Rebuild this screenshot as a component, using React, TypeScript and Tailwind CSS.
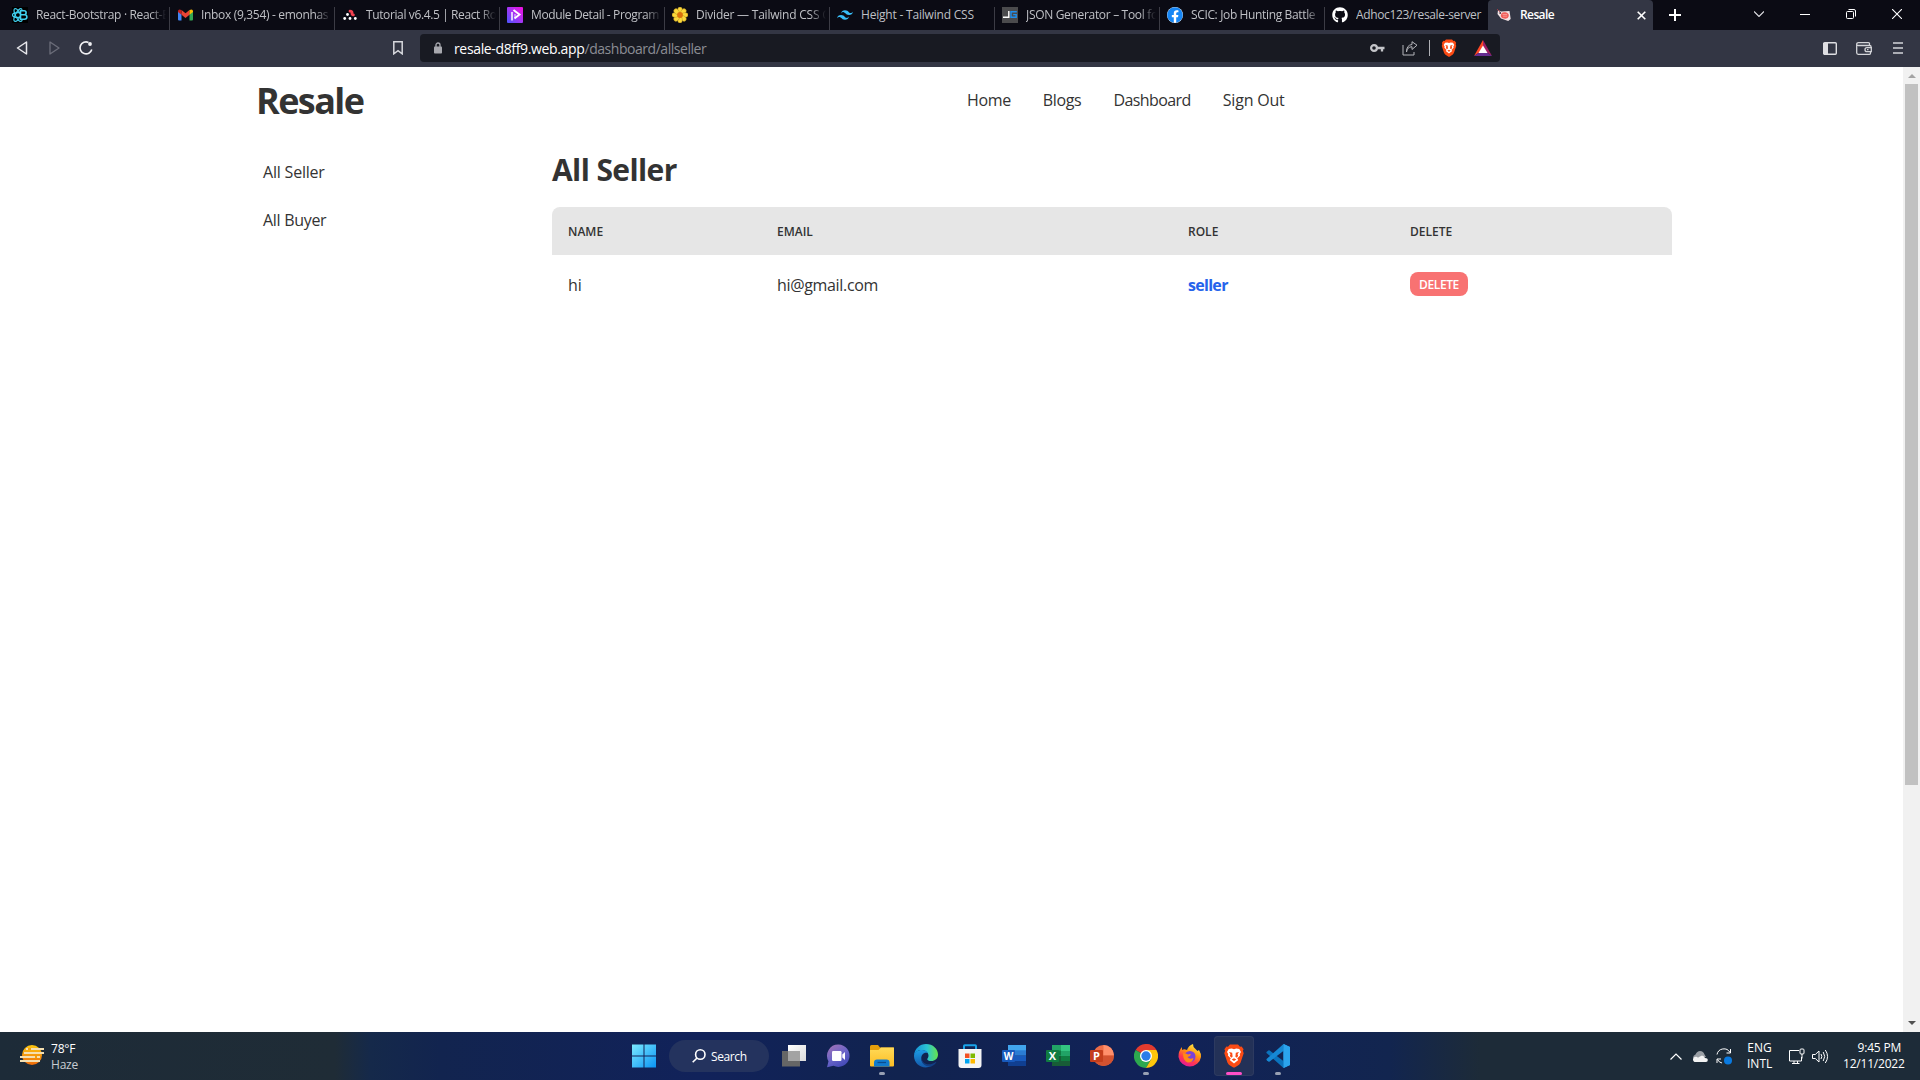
import React from "react";
import { SiTailwindcss } from "react-icons/si";
import { FaGithub, FaFacebook } from "react-icons/fa";

const Brave = ({ s }: { s: number }) => (
  <svg width={s} height={s} viewBox="0 0 24 24">
    <path fill="#fb4b14" d="M8 .5h8l2 2.2 1.6-.3 2 2.8-.7 1.600.8 2.400-3.200 9.500-1.400 2-4.400 2.800h-1.400l-4.400-2.800-1.400-2L2.300 9.200l.8-2.400-.7-1.600 2-2.800 1.600.3z" />
    <path fill="#fff" d="M12 5.300l2.300-.8 3 .6 1.700 2.900-1.200 1.900.3 1.700-2.900 2.900 1.100 1.500-4.300 3.400-4.300-3.400 1.100-1.500-2.900-2.900.3-1.700L5 8l1.700-2.900 3-.6z" />
    <path fill="#fb4b14" d="M7 8l3.200.8.4 4-1.500 1-1.300-2 .7-1.500zM17 8l-3.200.8-.4 4 1.500 1 1.300-2-.7-1.500zM9.700 15.500l2.300-1.200 2.300 1.200-2.300 1.400z" />
  </svg>
);

const ReactBootstrap = () => (
  <svg width="16" height="16" viewBox="0 0 16 16" fill="none" stroke="#41d1f0">
    <rect width="16" height="16" fill="#000" stroke="none" />
    <ellipse cx="6" cy="8" rx="5.500" ry="2.400" strokeWidth="1.200" />
    <ellipse cx="6" cy="8" rx="7" ry="2.500" strokeWidth="1.200" transform="rotate(62 6 8)" />
    <ellipse cx="6" cy="8" rx="7" ry="2.500" strokeWidth="1.200" transform="rotate(118 6 8)" />
    <path d="M8.500 3.700h3.600q2 0 2 2t-2 2.100h-3.600zM8.500 7.800h4q2.400 0 2.400 2.200t-2.400 2.300h-4z" strokeWidth="1.600" fill="#000" />
  </svg>
);

const Gmail = () => (
  <svg width="15" height="12" viewBox="0 0 15 12">
    <path fill="#4285f4" d="M0 2v8.500Q0 11.500 1 11.500h2.500V4z" />
    <path fill="#34a853" d="M15 2v8.500q0 1-1 1h-2.500V4z" />
    <path fill="#ea4335" d="M3.500 1l4 3.200 4-3.200v4.700l-4 3.200-4-3.200z" />
    <path fill="#c5221f" d="M0 2Q.3-.5 3.500 1v4.700L0 3z" />
    <path fill="#fbbc04" d="M15 2q-.3-2.500-3.500-1v4.700L15 3z" />
  </svg>
);

const RouterIcon = () => (
  <svg width="14" height="12" viewBox="0 0 14 12">
    <g fill="#fff"><circle cx="4.500" cy="5.500" r="1.400" /><circle cx="1.700" cy="9.500" r="1.400" /><circle cx="7" cy="9.500" r="1.400" /><circle cx="12.300" cy="9.500" r="1.400" /></g>
    <path d="M7 2.200q2.500 0 2 2-.2 1.500 1.400 1.700" stroke="#f44250" strokeWidth="2.800" strokeLinecap="round" fill="none" />
  </svg>
);

const ModuleIcon = () => (
  <svg width="16" height="16" viewBox="0 0 16 16">
    <defs><linearGradient id="mod" x1="0" y1="1" x2="1" y2="0"><stop stopColor="#4a55ff" /><stop offset=".5" stopColor="#a436f5" /><stop offset="1" stopColor="#f80ce0" /></linearGradient></defs>
    <rect width="16" height="16" rx="1" fill="url(#mod)" />
    <path d="M5 5v8.500" stroke="#fff" strokeWidth="1.500" /><path d="M6.500 3l6 4.500-5 4" stroke="#fff" strokeWidth="1.900" fill="none" /><path d="M8 7v4" stroke="#fff" strokeOpacity=".6" strokeWidth="1.400" />
  </svg>
);

const petals = [0, 45, 90, 135, 180, 225, 270, 315];
const Daisy = () => (
  <svg width="16" height="16" viewBox="0 0 16 16">
    {petals.map((a) => <ellipse key={a} cx="8" cy="3.200" rx="2.400" ry="3.200" fill="#fbd83a" stroke="#a8831b" strokeWidth=".4" transform={`rotate(${a} 8 8)`} />)}
    <circle cx="8" cy="8" r="2.900" fill="#d9710c" />
  </svg>
);

const JsonIcon = () => (
  <svg width="16" height="16" viewBox="0 0 16 16" fill="none" strokeWidth="1.400">
    <rect width="16" height="16" fill="#4b4b4d" />
    <path d="M1 10.300h5.800V4" stroke="#fff" />
    <path d="M14.800 4.700H9v5.600h5.200V7.600h-3" stroke="#1f8ff0" />
  </svg>
);

const ResaleIcon = () => (
  <svg width="14" height="13" viewBox="0 0 14 13">
    <path d="M1 1l3 1.500L12.500 2l1.200 8-2.500 2L4 9.500.5 5z" fill="#f2e4e6" />
    <path d="M0 0l3 3" stroke="#b33a45" strokeWidth=".8" />
    <ellipse cx="7.800" cy="6.500" rx="4" ry="3.200" fill="#f0605c" transform="rotate(12 8 6.500)" />
    <circle cx="3.200" cy="4" r=".9" fill="#47323d" />
    <path d="M5.500 5.500h4.500M6 7.200h4" stroke="#f9a9a4" strokeWidth=".7" />
  </svg>
);

const fade = "[mask-image:linear-gradient(to_right,black_88%,transparent_100%)]";
const tabs = [
  { icon: <ReactBootstrap />, title: "React-Bootstrap · React-B", style: `${fade} tracking-[-0.33px]` },
  { icon: <Gmail />, title: "Inbox (9,354) - emonhas", style: `${fade} tracking-[-0.32px]` },
  { icon: <RouterIcon />, title: "Tutorial v6.4.5 | React Ro", style: `${fade} tracking-[-0.38px]` },
  { icon: <ModuleIcon />, title: "Module Detail - Program", style: `${fade} tracking-[-0.38px]` },
  { icon: <Daisy />, title: "Divider — Tailwind CSS C", style: `${fade} tracking-[-0.22px]` },
  { icon: <SiTailwindcss size={16} color="#38bdf8" />, title: "Height - Tailwind CSS", style: "tracking-[-0.2px]" },
  { icon: <JsonIcon />, title: "JSON Generator – Tool fo", style: `${fade} tracking-[-0.32px]` },
  { icon: <span className="flex rounded-full bg-white"><FaFacebook size={16} color="#1686f5" /></span>, title: "SCIC: Job Hunting Battle", style: `${fade} tracking-[-0.36px]` },
  { icon: <FaGithub size={16} color="#fff" />, title: "Adhoc123/resale-server", style: "tracking-[-0.36px]" },
];

function TabStrip() {
  return (
    <div className="flex h-[30px] bg-[#0b0b14] text-[12px] text-[#bfc0c5]">
      <div className="flex w-[1488px] pl-[5px]">
        {tabs.map((t, i) => (
          <div key={t.title} className="flex h-[30px] w-[165px] shrink-0 items-center">
            <div className="flex h-full w-[164px] items-center pl-[7px]">
              <span className="flex w-4 shrink-0 justify-center">{t.icon}</span>
              <span className={`ml-2 w-[130px] overflow-hidden whitespace-nowrap leading-[18px] ${t.style}`}>{t.title}</span>
            </div>
            {i < 8 && <div className="mt-[7px] h-[23px] w-px bg-[#3c3c45]" />}
          </div>
        ))}
      </div>
      <div className="flex w-[165px] items-center rounded-t bg-[#333644] pl-[9px] text-white">
        <ResaleIcon />
        <span className="ml-[9px] w-[117px] font-semibold tracking-[-0.6px]">Resale</span>
        <svg width="9" height="9" viewBox="0 0 9 9" stroke="#fff" strokeWidth="1.600"><path d="M.7.700l7.600 7.600M8.300.700L.7 8.300" /></svg>
      </div>
      <svg className="ml-4 mt-[9px]" width="12" height="12" stroke="#fff" strokeWidth="2"><path d="M6 0v12M0 6h12" /></svg>
      <div className="ml-[73px] flex items-center gap-9 pb-[2px]">
        <svg width="10" height="6" viewBox="0 0 10 6" fill="none" stroke="#e4e4e8" strokeWidth="1.100"><path d="M0 .5l5 5 5-5" /></svg>
        <svg width="10" height="10" stroke="#fff"><path d="M0 5.500h10" /></svg>
        <svg width="10" height="10" viewBox="0 0 10 10" fill="none" stroke="#fff"><rect x=".5" y="2.500" width="7" height="7" rx="1" /><path d="M2.500.5H8Q9.500.5 9.500 2v5.500" /></svg>
        <svg width="10" height="10" viewBox="0 0 10 10" stroke="#fff" strokeWidth="1.100"><path d="M0 0l10 10M10 0L0 10" /></svg>
      </div>
    </div>
  );
}

function Toolbar() {
  return (
    <div className="flex h-[37px] items-center bg-[#333644] pb-px">
      <svg className="ml-4" width="12" height="14" viewBox="0 0 12 14" fill="none" stroke="#e8e8ec" strokeWidth="1.500" strokeLinejoin="round"><path d="M10.500 1v12L1.500 7z" /></svg>
      <svg className="ml-[21px]" width="12" height="14" viewBox="0 0 12 14" fill="none" stroke="#6c6e7a" strokeWidth="1.300" strokeLinejoin="round"><path d="M1 1v12L10 7z" /></svg>
      <svg className="ml-[17px]" width="16" height="16" viewBox="0 0 16 16" fill="none" stroke="#f0f0f3" strokeWidth="1.600"><path d="M10.500 2.400A6 6 0 1 0 13.800 9.500" /><circle cx="12" cy="4" r="1.900" fill="#f0f0f3" stroke="none" /></svg>
      <svg className="ml-[299px]" width="10" height="14" viewBox="0 0 10 14" fill="none" stroke="#d7d8dd" strokeWidth="1.500"><path d="M.8.800h8.400v12L5 9.700.8 12.800z" /></svg>
      <div className="ml-[17px] flex h-7 w-[1080px] items-center rounded bg-[#181a22] pl-[14px]">
        <svg width="8" height="12" viewBox="0 0 8 12"><rect y="4.500" width="8" height="7" rx=".8" fill="#a7a8ae" /><path d="M2 5V3a2 2 0 0 1 4 0v2" fill="none" stroke="#a7a8ae" strokeWidth="1.300" /></svg>
        <span className="ml-[12px] w-[916px] whitespace-nowrap text-[14px] tracking-[-0.46px] text-[#8b8d94]"><span className="tracking-[-0.35px] text-white">resale-d8ff9.web.app</span>/dashboard/allseller</span>
        <svg width="15" height="10" viewBox="0 0 15 10"><circle cx="4" cy="5" r="2.900" fill="none" stroke="#c4c5c9" strokeWidth="2.200" /><path d="M7 5h7.500M12 5v3.500" stroke="#c4c5c9" strokeWidth="2.300" /></svg>
        <svg className="ml-[17px]" width="16" height="15" viewBox="0 0 16 15" fill="none" stroke="#b4b5ba"><path d="M1 4v10h11v-3M4.500 11q.5-5 5.500-5.300V8.500l5-4.300-5-3.500v2.800Q4.500 4 4.500 11z" /></svg>
        <div className="ml-[11px] h-4 w-px bg-[#b0b1b6]" />
        <span className="ml-[10px]"><Brave s={18} /></span>
        <svg className="ml-[16px]" width="18" height="16" viewBox="0 0 18 16"><path d="M9 0L0 16l9-6z" fill="#ff4724" /><path d="M9 0l9 16-9-6z" fill="#9e1f63" /><path d="M0 16l9-6 9 6z" fill="#662d91" /><path d="M9 5.500L4.500 13h9z" fill="#fff" /></svg>
      </div>
      <svg className="ml-[323px]" width="14" height="13" viewBox="0 0 14 13"><rect x=".7" y=".7" width="12.600" height="11.600" rx="1" fill="none" stroke="#dedee2" strokeWidth="1.400" /><path d="M0 1h5v11H0z" fill="#dedee2" /></svg>
      <svg className="ml-[19px]" width="16" height="13" viewBox="0 0 16 13" fill="none" stroke="#d4d5d9" strokeWidth="1.300"><path d="M13.500 3.500v-2Q13.500.7 12.500.7h-10Q.7.700.7 2.200v8.600q0 1.500 1.500 1.500h11.300q1 0 1-1V9M.7 2.500q.3 1 1.500 1H14q1 0 1 1V6" /><path d="M15.300 5.700H11q-2 0-2 2t2 2h4.300z" /><path d="M11 7.700h1.500" /></svg>
      <svg className="ml-[21px]" width="10" height="12" stroke="#d4d5d9" strokeWidth="1.600"><path d="M0 1h10M0 6h10M0 11h10" /></svg>
    </div>
  );
}

function Page() {
  return (
    <div className="flex h-[965px] bg-white text-[#333333]">
      <main className="w-[1903px]">
        <header className="flex h-[66px] items-center pl-[256px]">
          <h1 className="w-[711px] pt-[2px] text-[36px] font-bold leading-10 tracking-[-1.6px]">Resale</h1>
          <nav className="flex gap-8 whitespace-nowrap pb-px text-[16px] tracking-[-0.35px]">
            <a>Home</a><a>Blogs</a><a className="tracking-[-0.58px]">Dashboard</a><a className="tracking-[-0.2px]">Sign Out</a>
          </nav>
        </header>
        <div className="flex">
          <aside className="flex w-[552px] flex-col pl-[263px] pt-[15px] text-[16px] tracking-[-0.2px]">
            <a className="flex h-12 items-center">All Seller</a>
            <a className="flex h-12 items-center tracking-[-0.3px]">All Buyer</a>
          </aside>
          <section className="w-[1120px] pt-[19px]">
            <h2 className="text-[30px] font-bold leading-9 tracking-[-0.6px]">All Seller</h2>
            <div className="mt-[19px] grid h-12 grid-cols-[209px_411px_222px_1fr] items-center rounded-t-lg bg-[#e6e6e6] pl-4 pt-px text-[12px] font-semibold uppercase">
              <span>Name</span><span>Email</span><span>Role</span><span>Delete</span>
            </div>
            <div className="grid h-[58px] grid-cols-[209px_411px_222px_1fr] items-center pl-4 text-[16px]">
              <span className="pt-px">hi</span><span className="pt-px tracking-[-0.33px]">hi@gmail.com</span><span className="pt-px font-bold tracking-[-0.7px] text-[#2563eb]">seller</span>
              <button className="flex h-6 w-[58px] items-center justify-center rounded-lg bg-[#f87272] pt-px text-[12px] font-semibold uppercase tracking-[-0.4px] text-white">Delete</button>
            </div>
          </section>
        </div>
      </main>
      <div className="flex w-[17px] flex-col items-center bg-[#f1f1f1]">
        <svg className="mt-[7px]" width="8" height="4"><path d="M0 4l4-4 4 4z" fill="#a3a3a3" /></svg>
        <div className="mt-[6px] h-[701px] w-[13px] bg-[#c1c1c1]" />
        <svg className="mb-[7px] mt-auto" width="8" height="4"><path d="M0 0l4 4 4-4z" fill="#505050" /></svg>
      </div>
    </div>
  );
}

const Windows = () => (
  <svg width="24" height="24" viewBox="0 0 24 24"><defs><linearGradient id="win" x2="1" y2="1"><stop stopColor="#7be9ff" /><stop offset="1" stopColor="#0a94f4" /></linearGradient></defs><path fill="url(#win)" d="M0 .5h11.500V11.500H0zM12.500.5H24v11H12.500zM0 12.500h11.500v11H0zM12.500 12.500H24v11H12.500z" /></svg>
);
const TaskView = () => (
  <svg width="24" height="24" viewBox="0 0 24 24"><defs><linearGradient id="tv" x2="1" y2="1"><stop stopColor="#fff" /><stop offset="1" stopColor="#dadada" /></linearGradient></defs><path d="M6 1h18v16H6z" fill="url(#tv)" /><path d="M0 7h18v15.500H0z" fill="#666" /><path d="M6 7h12v10H6z" fill="#a3a3a3" /></svg>
);
const Chat = () => (
  <svg width="24" height="24" viewBox="0 0 24 24"><defs><linearGradient id="chat" x2=".6" y2="1"><stop stopColor="#a774b4" /><stop offset=".6" stopColor="#6864c8" /><stop offset="1" stopColor="#454bb8" /></linearGradient></defs><path d="M12.500 0.500a11.200 11.200 0 1 1-5 21.300L1 23.200l1.500-6A11.200 11.200 0 0 1 12.500.5z" fill="url(#chat)" /><rect x="6" y="7" width="9.500" height="10" rx="1.200" fill="#fff" /><path d="M16.300 10.500L19 8v8l-2.700-2.500z" fill="#fff" /></svg>
);
const Folder = () => (
  <svg width="24" height="24" viewBox="0 0 24 24"><defs><linearGradient id="fold" x2="0" y2="1"><stop stopColor="#ffda58" /><stop offset="1" stopColor="#fdbd24" /></linearGradient></defs><path d="M0 2.500Q0 1 1.500 1H8l2 2.500h13q1 0 1 1V8H0z" fill="#e59e0b" /><path d="M0 6h8.500L11 3.500h13v18q0 1-1 1H1q-1 0-1-1z" fill="url(#fold)" /><path d="M4 22.500v-4q0-3 3-3h9.500q3 0 3 3v4z" fill="#117bcd" /><path d="M7.500 18.500h8.500" stroke="#0b4c8d" strokeWidth="1.200" /></svg>
);
const Edge = () => (
  <svg width="24" height="24" viewBox="0 0 24 24"><defs><linearGradient id="ea" y1=".4" x2="1" y2=".4"><stop stopColor="#1590db" /><stop offset=".55" stopColor="#2bc4d2" /><stop offset="1" stopColor="#66e44a" /></linearGradient><linearGradient id="eb" x2="0" y2="1"><stop stopColor="#1c9ce6" /><stop offset="1" stopColor="#1357a8" /></linearGradient></defs>
    <path d="M0 11.500C.5 4.500 5.800 0 12 0c7 0 12 5 12 10.500 0 4.200-3.200 6.500-6.500 6.500-2.800 0-4.300-1-4.300-1.800 0-.7 1.300-1.200 1.300-3.400C14.500 8.500 11.500 6 8 6 4.200 6 1 8 0 11.500z" fill="url(#ea)" />
    <path d="M0 12c0-3.500 3.500-6 8-6 3 0 5 1.300 6 3-5-1.500-7.500 3-6.500 7 1 4 5.500 6.300 10 5.800C9.500 26.500 0 20.500 0 12z" fill="url(#eb)" /><path d="M8 13c-1.500 6.500 7 10 13.800 5 .5-.2.700.2.400.6-1.800 2.600-4 3.600-5 3.800C10.500 23 5.500 18 8 13z" fill="#123f84" /></svg>
);
const Store = () => (
  <svg width="24" height="24" viewBox="0 0 24 24"><path d="M6 6V2q0-.8.800-.8h10.400q.8 0 .8.800v4" fill="none" stroke="#1aa3e8" strokeWidth="2" /><path d="M.5 5h23v16q0 3-3 3h-17q-3 0-3-3z" fill="#f4f4f5" /><path fill="#f25022" d="M7 9.500h4.500V14H7z" /><path fill="#7fba00" d="M12.500 9.500H17V14h-4.500z" /><path fill="#00a4ef" d="M7 15h4.500v4.500H7z" /><path fill="#ffb900" d="M12.500 15H17v4.500h-4.500z" /></svg>
);
const WordIcon = () => (
  <div className="relative h-6 w-6">
    <svg width="24" height="24" viewBox="0 0 24 24"><path d="M6 1h18v6H6z" fill="#41a5ee" /><path d="M6 6.300h18v5.400H6z" fill="#2b7cd3" /><path d="M6 11.700h18V17H6z" fill="#185abd" /><path d="M6 17h18v5H6z" fill="#103f91" /><rect y="6" width="13" height="12" rx="1" fill="#185abd" /></svg>
    <span className="absolute left-0 top-[6px] w-[13px] text-center text-[10px] font-bold leading-3 text-white">W</span>
  </div>
);
const ExcelIcon = () => (
  <div className="relative h-6 w-6">
    <svg width="24" height="24" viewBox="0 0 24 24"><path d="M6 1h18v21H6z" fill="#21a366" /><path d="M15 1h9v6h-9z" fill="#33c481" /><path d="M6 6.500h9v5H6z" fill="#107c41" /><path d="M6 12h18v10H6z" fill="#185c37" /><path d="M15 12h9v5h-9z" fill="#107c41" /><rect y="6" width="13" height="12" rx="1" fill="#107c41" /></svg>
    <span className="absolute left-0 top-[6px] w-[13px] text-center text-[11px] font-bold leading-3 text-white">X</span>
  </div>
);
const PowerIcon = () => (
  <div className="relative h-6 w-6">
    <svg width="24" height="24" viewBox="0 0 24 24"><circle cx="13.500" cy="11.500" r="10.500" fill="#ed6c47" /><path d="M13.500 1A10.500 10.500 0 0 1 24 11.500H13.500z" fill="#ff8f6b" /><path d="M3 11.500h21a10.500 10.500 0 0 1-21 0z" fill="#d35230" /><rect y="6" width="13" height="12" rx="1" fill="#c43e1c" /></svg>
    <span className="absolute left-0 top-[6px] w-[13px] text-center text-[11px] font-bold leading-3 text-white">P</span>
  </div>
);
const Chrome = () => (
  <svg width="24" height="24" viewBox="0 0 24 24"><path d="M12 12L1.600 6A12 12 0 0 1 22.400 6z" fill="#e33b2e" /><path d="M12 12L1.600 6A12 12 0 0 0 12 24l5.200-9z" fill="#2da94f" /><path d="M12 6h10.400A12 12 0 0 1 12 24l5.200-9z" fill="#fdc60b" /><path d="M12 0a12 12 0 0 1 10.400 6H12z" fill="#e33b2e" /><circle cx="12" cy="12" r="6" fill="#fff" /><circle cx="12" cy="12" r="4.700" fill="#2b7de9" /></svg>
);
const Firefox = () => (
  <svg width="24" height="24" viewBox="0 0 24 24"><defs><linearGradient id="ff" x1=".8" x2=".3" y2="1"><stop stopColor="#fff44f" /><stop offset=".4" stopColor="#ff980e" /><stop offset=".7" stopColor="#ff3750" /><stop offset="1" stopColor="#e3189b" /></linearGradient></defs><path d="M15 0q0 3 2 4.500L19.500 7 21 6q2.300 3.500 2 7A11.400 11.400 0 0 1 .5 13Q.3 7 4 3v3q1-.7 2.500-.8L9 6q1.500-4.500 6-6z" fill="url(#ff)" /><circle cx="12" cy="12.500" r="5.500" fill="#7a41d9" /><path d="M5 9q3 0 5 1.500 2-1 3 0-1 2-3.500 2.500 2 3 6 1-1 5-6 4.500Q5 17 5 9z" fill="#ff8a16" /></svg>
);
const Code = () => (
  <svg width="24" height="24" viewBox="0 0 24 24"><path d="M17.500 0L24 3v18l-6.500 3z" fill="#2ba4ee" /><path d="M17.500 24L.8 9.200q-.8-.8 0-1.500L2.300 6.400q.7-.5 1.400 0L18 17.500z" fill="#0b73bd" /><path d="M17.500 0L.8 14.800q-.8.8 0 1.500l1.500 1.300q.7.500 1.400 0L18 6.500z" fill="#1688d4" /><path d="M17.500 0L24 3v18l-6.500 3.000z" fill="#2ba4ee" /></svg>
);

const apps: { el: React.ReactNode; mark?: string }[] = [
  { el: <TaskView /> }, { el: <Chat /> }, { el: <Folder />, mark: "w-[6px] bg-[#98a0b3]" }, { el: <Edge /> }, { el: <Store /> },
  { el: <WordIcon /> }, { el: <ExcelIcon /> }, { el: <PowerIcon /> }, { el: <Chrome />, mark: "w-[6px] bg-[#98a0b3]" }, { el: <Firefox /> },
  { el: <Brave s={24} />, mark: "w-4 bg-[#ff4fc8]" }, { el: <Code />, mark: "w-[6px] bg-[#98a0b3]" },
];

function Taskbar() {
  return (
    <footer className="flex h-12 bg-[linear-gradient(90deg,#1d2b38_0px,#1f2c36_335px,#15294a_370px,#12244f_440px,#11225a_700px,#11234f_900px,#112258_1150px,#12254f_1390px,#1d2b38_1480px,#1d2b38_1920px)] text-[12px] text-white">
      <div className="flex w-[632px] items-start pl-5 pt-[12px]">
        <svg width="24" height="22" viewBox="0 0 24 22"><defs><linearGradient id="sun" x2="0" y2="1"><stop stopColor="#fdc810" /><stop offset="1" stopColor="#ef6b0a" /></linearGradient></defs><circle cx="12" cy="11" r="10" fill="url(#sun)" /><path d="M6 5h18M4 9h20M0 13h20M0 17h20" stroke="#f5dfb0" strokeWidth="1.900" /><path d="M8 5h3M15 13h2" stroke="#f4a10c" strokeWidth="1.900" /></svg>
        <div className="-mt-[3px] ml-[7px] leading-4 tracking-[-0.2px]"><div>78°F</div><div className="text-[#c7ccd1]">Haze</div></div>
      </div>
      <div className="flex items-center"><Windows /></div>
      <div className="ml-[13px] mt-2 flex h-8 w-[100px] items-center rounded-full bg-[#24335e] pl-[23px]">
        <svg width="14" height="14" viewBox="0 0 14 14" fill="none" stroke="#fff" strokeWidth="1.600"><circle cx="8.300" cy="5.500" r="4.700" /><path d="M5 9L.7 13.300" /></svg>
        <span className="ml-[5px] pt-px tracking-[-0.4px]">Search</span>
      </div>
      <div className="ml-[3px] flex">
        {apps.map((a, i) => (
          <div key={i} className={`mx-[2px] mt-1 flex h-10 w-10 flex-col items-center rounded pt-2 ${i === 10 ? "bg-[#233157] ring-1 ring-inset ring-[#2d3a60]" : ""}`}>
            {a.el}
            {a.mark && <div className={`mt-[4px] h-[3px] shrink-0 rounded-full ${a.mark}`} />}
          </div>
        ))}
      </div>
      <div className="ml-auto flex items-center pr-[19px]">
        <svg width="12" height="7" viewBox="0 0 12 7" fill="none" stroke="#fff" strokeWidth="1.200"><path d="M.5 6.500L6 1l5.500 5.500" /></svg>
        <svg className="ml-[10px]" width="16" height="11" viewBox="0 0 16 11"><path d="M1 7a4 4 0 0 1 2.500-3.500Q5 0 8 0q3.500.3 4.500 3.500L14 6z" fill="#9a9fa5" /><path d="M2.500 11a2.800 2.800 0 0 1 0-5q2-.8 3.500.4l4-2q2.500.5 3 2.600 2.800 0 2.800 2T14 11z" fill="#f3f3f3" /></svg>
        <svg className="ml-[8px]" width="17" height="17" viewBox="0 0 17 17" fill="none" stroke="#fff"><path d="M1 6.500A7 7 0 0 1 14 4.500M14.500 1v4h-4M1 15v-4h4M1.500 11.500Q3 14.500 6 15" /><circle cx="12" cy="12.500" r="4" fill="#0a7ae0" stroke="none" /></svg>
        <div className="ml-[14px] w-[25px] text-center leading-4">ENG<br />INTL</div>
        <svg className="ml-[16px]" width="17" height="17" viewBox="0 0 17 17" fill="none" stroke="#fff"><path d="M11 2.500H1.500v10.500h12V9M4 15.500h7.500M6 13v2.500M9.500 13v2.500" /><rect x="12" y="1" width="4" height="5" rx="1" /><path d="M14 6v4.500" /></svg>
        <svg className="ml-[7px]" width="17" height="15" viewBox="0 0 17 15" fill="none" stroke="#fff"><path d="M.5 5.500v4h2.800L7 13V2L3.300 5.500zM9 5q1.700 2.500 0 5M11.200 3q3 4.500 0 9M13.300 1q4.500 6.500 0 13" /></svg>
        <div className="ml-[14px] w-[58px] whitespace-nowrap text-right leading-4 tracking-[-0.2px]">9:45 PM<br />12/11/2022</div>
      </div>
    </footer>
  );
}

export default function App() {
  return (
    <div className="h-[1080px] w-[1920px] overflow-hidden font-['Open_Sans','Noto_Sans',sans-serif]">
      <TabStrip />
      <Toolbar />
      <Page />
      <Taskbar />
    </div>
  );
}
